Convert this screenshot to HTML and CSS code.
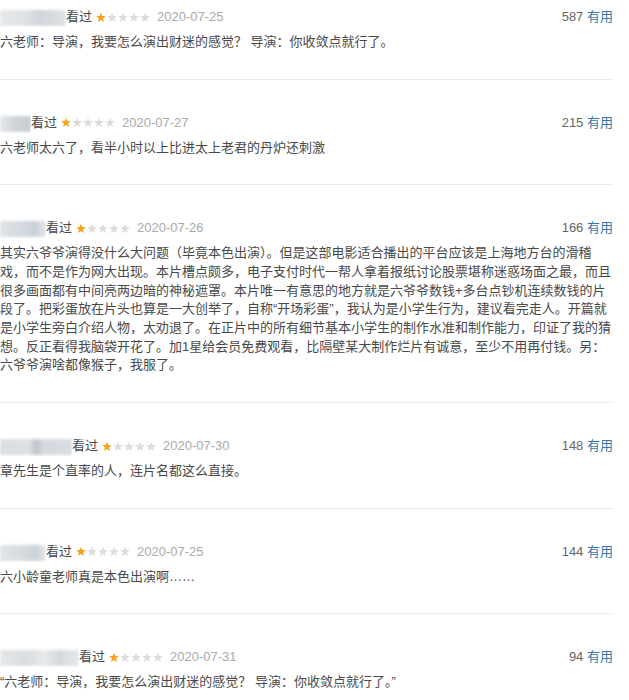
FILE: index.html
```html
<!DOCTYPE html>
<html lang="zh-CN">
<head>
<meta charset="utf-8">
<title>短评</title>
<link rel="stylesheet" href="styles.css">
</head>
<body>
<svg width="0" height="0" class="defs">
  <defs>
    <polygon id="star" points="5,0.3 6.3,3.6 9.8,3.8 7.1,6.1 8,9.6 5,7.6 2,9.6 2.9,6.1 0.2,3.8 3.7,3.6"/>
  </defs>
</svg>
<div class="comments">

  <div class="item">
    <div class="info">
      <span class="name"><span class="blur b1"></span></span>
      <span class="seen">看过</span>
      <svg class="stars" width="54" height="11" viewBox="0 0 54 11"><use href="#star" x="0" y="0.5" class="on"/><use href="#star" x="11" y="0.5" class="off"/><use href="#star" x="22" y="0.5" class="off"/><use href="#star" x="33" y="0.5" class="off"/><use href="#star" x="44" y="0.5" class="off"/></svg>
      <span class="time">2020-07-25</span>
      <span class="votes"><span class="count">587</span> <a class="useful">有用</a></span>
    </div>
    <p class="short">六老师：导演，我要怎么演出财迷的感觉？ 导演：你收敛点就行了。</p>
  </div>

  <div class="item">
    <div class="info">
      <span class="name"><span class="blur b2"></span></span>
      <span class="seen">看过</span>
      <svg class="stars" width="54" height="11" viewBox="0 0 54 11"><use href="#star" x="0" y="0.5" class="on"/><use href="#star" x="11" y="0.5" class="off"/><use href="#star" x="22" y="0.5" class="off"/><use href="#star" x="33" y="0.5" class="off"/><use href="#star" x="44" y="0.5" class="off"/></svg>
      <span class="time">2020-07-27</span>
      <span class="votes"><span class="count">215</span> <a class="useful">有用</a></span>
    </div>
    <p class="short">六老师太六了，看半小时以上比进太上老君的丹炉还刺激</p>
  </div>

  <div class="item">
    <div class="info">
      <span class="name"><span class="blur b3"></span></span>
      <span class="seen">看过</span>
      <svg class="stars" width="54" height="11" viewBox="0 0 54 11"><use href="#star" x="0" y="0.5" class="on"/><use href="#star" x="11" y="0.5" class="off"/><use href="#star" x="22" y="0.5" class="off"/><use href="#star" x="33" y="0.5" class="off"/><use href="#star" x="44" y="0.5" class="off"/></svg>
      <span class="time">2020-07-26</span>
      <span class="votes"><span class="count">166</span> <a class="useful">有用</a></span>
    </div>
    <p class="short">其实六爷爷演得没什么大问题（毕竟本色出演）。但是这部电影适合播出的平台应该是上海地方台的滑稽戏，而不是作为网大出现。本片槽点颇多，电子支付时代一帮人拿着报纸讨论股票堪称迷惑场面之最，而且很多画面都有中间亮两边暗的神秘遮罩。本片唯一有意思的地方就是六爷爷数钱+多台点钞机连续数钱的片段了。把彩蛋放在片头也算是一大创举了，自称“开场彩蛋”，我认为是小学生行为，建议看完走人。开篇就是小学生旁白介绍人物，太劝退了。在正片中的所有细节基本小学生的制作水准和制作能力，印证了我的猜想。反正看得我脑袋开花了。加1星给会员免费观看，比隔壁某大制作烂片有诚意，至少不用再付钱。另：六爷爷演啥都像猴子，我服了。</p>
  </div>

  <div class="item">
    <div class="info">
      <span class="name"><span class="blur b4"></span></span>
      <span class="seen">看过</span>
      <svg class="stars" width="54" height="11" viewBox="0 0 54 11"><use href="#star" x="0" y="0.5" class="on"/><use href="#star" x="11" y="0.5" class="off"/><use href="#star" x="22" y="0.5" class="off"/><use href="#star" x="33" y="0.5" class="off"/><use href="#star" x="44" y="0.5" class="off"/></svg>
      <span class="time">2020-07-30</span>
      <span class="votes"><span class="count">148</span> <a class="useful">有用</a></span>
    </div>
    <p class="short">章先生是个直率的人，连片名都这么直接。</p>
  </div>

  <div class="item">
    <div class="info">
      <span class="name"><span class="blur b5"></span></span>
      <span class="seen">看过</span>
      <svg class="stars" width="54" height="11" viewBox="0 0 54 11"><use href="#star" x="0" y="0.5" class="on"/><use href="#star" x="11" y="0.5" class="off"/><use href="#star" x="22" y="0.5" class="off"/><use href="#star" x="33" y="0.5" class="off"/><use href="#star" x="44" y="0.5" class="off"/></svg>
      <span class="time">2020-07-25</span>
      <span class="votes"><span class="count">144</span> <a class="useful">有用</a></span>
    </div>
    <p class="short">六小龄童老师真是本色出演啊……</p>
  </div>

  <div class="item">
    <div class="info">
      <span class="name"><span class="blur b6"></span></span>
      <span class="seen">看过</span>
      <svg class="stars" width="54" height="11" viewBox="0 0 54 11"><use href="#star" x="0" y="0.5" class="on"/><use href="#star" x="11" y="0.5" class="off"/><use href="#star" x="22" y="0.5" class="off"/><use href="#star" x="33" y="0.5" class="off"/><use href="#star" x="44" y="0.5" class="off"/></svg>
      <span class="time">2020-07-31</span>
      <span class="votes"><span class="count">94</span> <a class="useful">有用</a></span>
    </div>
    <p class="short">“六老师：导演，我要怎么演出财迷的感觉？ 导演：你收敛点就行了。”</p>
  </div>

</div>
</body>
</html>
```

FILE: styles.css
```css
html, body {
  margin: 0;
  padding: 0;
  background: #fff;
}

body {
  font-family: "Liberation Sans", Arial, "Noto Sans CJK SC", sans-serif;
  font-size: 13px;
  color: #494949;
}

.defs {
  position: absolute;
  width: 0;
  height: 0;
}

.comments {
  width: 614px;
}

.item {
  padding: 33px 0 27px;
  border-bottom: 1px solid #ececec;
}

.item:first-child {
  padding-top: 7px;
}

.info {
  display: flex;
  align-items: center;
  height: 20px;
  line-height: 20px;
}

.name {
  display: block;
  height: 20px;
  overflow: hidden;
}

.blur {
  display: block;
  height: 16px;
  margin-top: 3px;
  filter: blur(1.6px);
}

.b1 {
  width: 66px;
  background: linear-gradient(90deg, #e6e8ea 0, #dfe2e5 40%, #cfd5db 60%, #dfe3e6 100%);
}
.b2 {
  width: 31px;
  background: linear-gradient(90deg, #e3e6e9 0, #cfd4d9 50%, #c7ccd1 100%);
}
.b3 {
  width: 46px;
  background: linear-gradient(90deg, #dfe3e7 0, #d5dadf 45%, #c9d1d8 75%, #e4e7ea 100%);
}
.b4 {
  width: 72px;
  background: linear-gradient(90deg, #d9dee3 0, #dde1e5 40%, #bfc5cb 50%, #d2d9df 60%, #d7dde3 100%);
}
.b5 {
  width: 46px;
  background: linear-gradient(90deg, #e1e4e7 0, #d6dbe0 50%, #cbd3da 80%, #e6e8ea 100%);
}
.b6 {
  width: 79px;
  background: linear-gradient(90deg, #e4e6e8 0, #dadde0 35%, #e8eaec 55%, #d5d9dd 75%, #e7e9eb 100%);
}

.seen {
  color: #494949;
}

.stars {
  display: block;
  margin: 0 7px 0 4px;
}

.stars .on {
  fill: #f7a21c;
}

.stars .off {
  fill: #dcdcdc;
}

.time {
  color: #aaa;
}

.votes {
  margin-left: auto;
  padding-right: 1px;
}

.count {
  color: #666;
}

.useful {
  color: #3377aa;
  text-decoration: none;
}

.short {
  margin: 6px 0 0;
  line-height: 18.67px;
  color: #494949;
  word-break: break-all;
}
```
